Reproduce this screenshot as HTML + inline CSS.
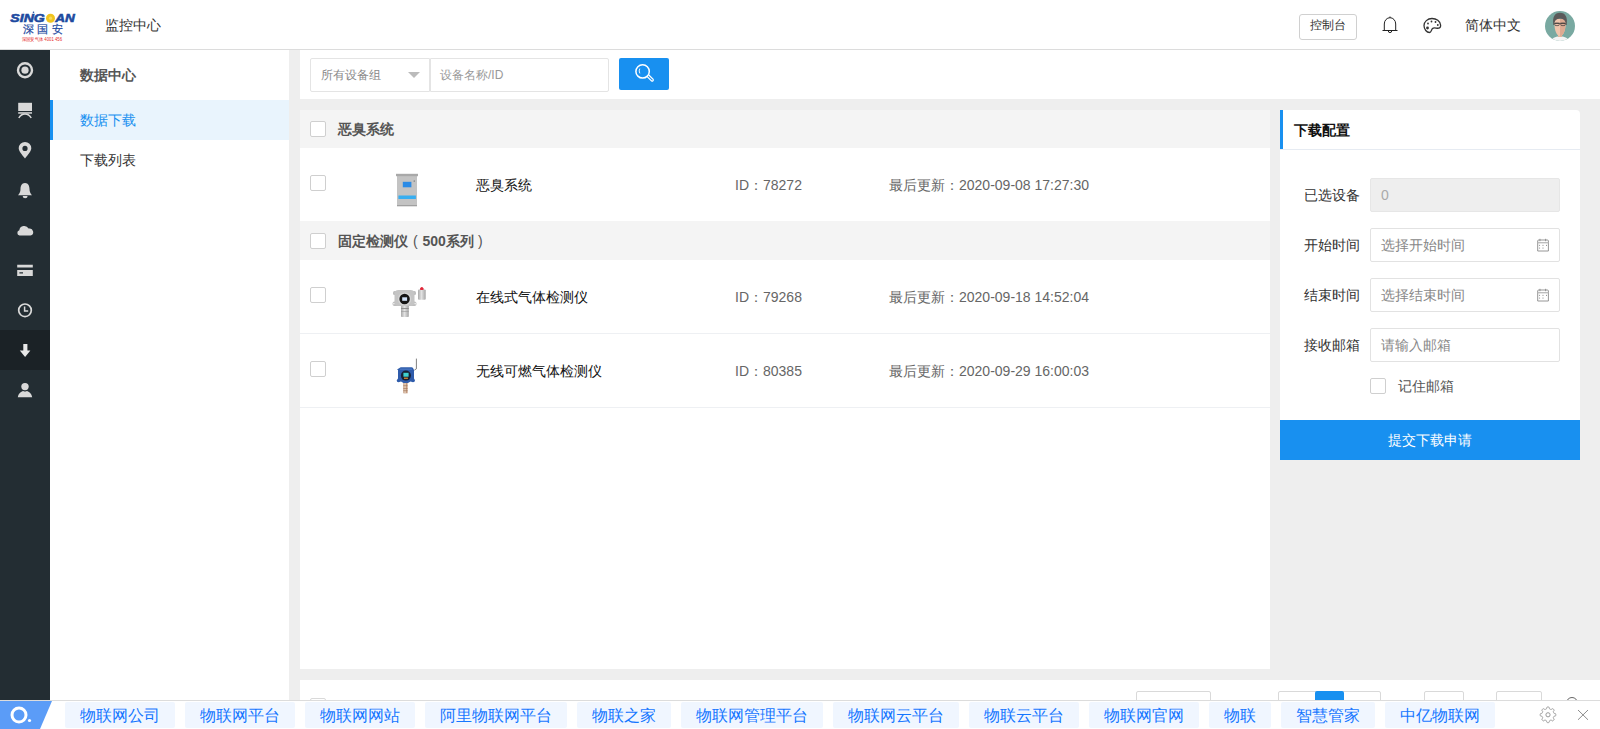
<!DOCTYPE html>
<html><head><meta charset="utf-8">
<style>
*{box-sizing:border-box;margin:0;padding:0}
html,body{width:1600px;height:729px;overflow:hidden;background:#eeeeee;font-family:"Liberation Sans",sans-serif;font-size:14px;color:#333}
.a{position:absolute}
.t{position:absolute;white-space:nowrap;line-height:20px}
#hdr{left:0;top:0;width:1600px;height:50px;background:#fff;border-bottom:1px solid #dcdcdc}
#side{left:0;top:50px;width:50px;height:650px;background:#232d33}
#sub{left:50px;top:50px;width:239px;height:650px;background:#fff}
#sbar{left:300px;top:50px;width:1300px;height:49px;background:#fff}
#list{left:300px;top:110px;width:970px;height:559px;background:#fff}
.grp{position:absolute;left:0;width:970px;height:38px;background:#f4f4f4}
.cb{position:absolute;width:16px;height:16px;border:1px solid #cfcfcf;border-radius:2px;background:#fff}
.row{position:absolute;left:0;width:970px;background:#fff;border-bottom:1px solid #eef0f3}
#rp{left:1280px;top:110px;width:300px;height:310px;background:#fff;border-radius:0 4px 0 0}
.inp{position:absolute;left:90px;width:190px;height:34px;border:1px solid #e2e2e2;border-radius:2px;background:#fff}
#btm{left:0;top:700px;width:1600px;height:29px;background:#fff;border-top:1px solid #dcdcdc}
.tag{position:absolute;top:1px;height:26px;background:#f0f6ff;color:#1677ff;font-size:16px;line-height:27px;padding:0 15px;border-radius:2px;white-space:nowrap}
</style></head><body>

<!-- header -->
<div id="hdr" class="a">
  <svg class="a" style="left:0;top:0" width="90" height="48" viewBox="0 0 90 48">
    <text x="10.3" y="21.9" font-family="Liberation Sans" font-weight="bold" font-style="italic" font-size="10.5" fill="#1d4a9f" stroke="#1d4a9f" stroke-width="0.55" textLength="34.5" lengthAdjust="spacingAndGlyphs">SING</text>
    <circle cx="50.5" cy="18.2" r="4.5" fill="#f0c41e"/>
    <circle cx="50.5" cy="18.2" r="1.6" fill="#f7d860"/>
    <text x="55.3" y="21.9" font-family="Liberation Sans" font-weight="bold" font-style="italic" font-size="10.5" fill="#1d4a9f" stroke="#1d4a9f" stroke-width="0.55" textLength="19.5" lengthAdjust="spacingAndGlyphs">AN</text>
    <circle cx="33.5" cy="12.3" r="0.8" fill="#1d4a9f"/>
    <text x="22.5" y="33.4" font-size="10.5" fill="#2148a0" stroke="#2148a0" stroke-width="0.2" textLength="40" lengthAdjust="spacing">深国安</text>
    <text x="22" y="41.3" font-size="5" fill="#e62a2a" textLength="40" lengthAdjust="spacingAndGlyphs">深国安气体 4001 456</text>
  </svg>
  <div class="t" style="left:105px;top:15px;color:#333">监控中心</div>
  <div class="a" style="left:1299px;top:14px;width:58px;height:26px;border:1px solid #d0d0d0;border-radius:3px"></div>
  <div class="t" style="left:1310px;top:15px;font-size:12px;color:#333">控制台</div>
  <svg class="a" style="left:1381px;top:15px" width="18" height="19" viewBox="0 0 18 19">
    <path d="M3.3 15.5 V9 A5.7 6.3 0 0 1 14.7 9 V15.5 M1.5 15.5 H16.5 M7.3 15.9 A1.7 1.7 0 0 0 10.7 15.9 M9 1.5 V2.7" fill="none" stroke="#222" stroke-width="1"/>
  </svg>
  <svg class="a" style="left:1423px;top:17px" width="19" height="17" viewBox="0 0 19 17">
    <path d="M9 1.5 C4.5 1.5 1 4.8 1 8.6 C1 12.5 3.8 15.5 6.5 15.5 C8.5 15.5 8 13 9.5 11.5 C11 10 13.5 11.5 15.5 11.2 C17.2 11 17.8 9.5 17.6 8 C17.2 4.2 13.5 1.5 9 1.5 Z" fill="none" stroke="#333" stroke-width="1.3"/>
    <circle cx="4.5" cy="11" r="1.4" fill="#333"/><circle cx="5" cy="6.5" r="0.9" fill="#333"/><circle cx="8.5" cy="4.5" r="0.9" fill="#333"/><circle cx="12.5" cy="5" r="0.9" fill="#333"/><circle cx="14.8" cy="8" r="0.9" fill="#333"/>
  </svg>
  <div class="t" style="left:1465px;top:15px;color:#333">简体中文</div>
  <svg class="a" style="left:1545px;top:11px" width="30" height="30" viewBox="0 0 30 30">
    <defs><clipPath id="av"><circle cx="15" cy="15" r="15"/></clipPath></defs>
    <circle cx="15" cy="15" r="15" fill="#79a9a1"/>
    <g clip-path="url(#av)">
      <path d="M6 30 Q7 26 15 25 Q23 26 24 30 Z" fill="#f4f4f4"/>
      <rect x="13" y="21" width="4" height="5" fill="#e0b49c"/>
      <path d="M9.2 8 Q9 24 15 25.5 Q21 24 20.8 8 Z" fill="#f0c4ac"/>
      <path d="M15 8 V25.5 Q21 24 20.8 8 Z" fill="#ddaa92"/>
      <path d="M8.3 14 Q6.8 2 15 1.8 Q23.2 2 21.7 14 L20.9 14 Q20.8 7.8 15 7.6 Q9.2 7.8 9.1 14 Z" fill="#5a5a5a"/>
      <path d="M9.2 12.3 H20.8" stroke="#3a3a3a" stroke-width="0.9"/>
      <rect x="9.8" y="12.2" width="4.4" height="2.4" rx="1" fill="none" stroke="#3a3a3a" stroke-width="0.7"/>
      <rect x="15.8" y="12.2" width="4.4" height="2.4" rx="1" fill="none" stroke="#3a3a3a" stroke-width="0.7"/>
    </g>
  </svg>
</div>

<!-- sidebar -->
<div id="side" class="a">
  <div class="a" style="left:0;top:280px;width:50px;height:40px;background:#1b2226"></div>
</div>
<svg class="a" style="left:0;top:0" width="50" height="420" viewBox="0 0 50 420">
  <g fill="#d9d9d9" stroke="none">
    <circle cx="25" cy="70.2" r="7" fill="none" stroke="#d9d9d9" stroke-width="2.4"/>
    <circle cx="25" cy="70.2" r="3.6"/>
    <rect x="18.2" y="102.8" width="13.8" height="8.2"/>
    <rect x="18.2" y="112.2" width="13.8" height="1.5"/>
    <path d="M18.8 118 Q21 114 25 114 Q29 114 31.2 118" fill="none" stroke="#d9d9d9" stroke-width="1.5"/>
    <path d="M25 158.5 C22 154.5 18.7 151 18.7 148.2 A6.3 6.3 0 0 1 31.3 148.2 C31.3 151 28 154.5 25 158.5 Z M25 145.8 A2.6 2.6 0 1 0 25 151 A2.6 2.6 0 1 0 25 145.8 Z" fill-rule="evenodd"/>
    <path d="M25 183 C21.5 183 20.5 186.5 20.5 189 C20.5 192 19.5 193.5 18 195.2 H32 C30.5 193.5 29.5 192 29.5 189 C29.5 186.5 28.5 183 25 183 Z"/>
    <path d="M22.7 196 A2.45 2.3 0 0 0 27.6 196 Z"/>
    <path d="M19.5 235.6 A2.8 2.8 0 0 1 19.3 230.2 A5 5 0 0 1 28.6 228.6 A3.6 3.6 0 0 1 30.5 235.6 Z"/>
    <path d="M17.2 264.8 H32.8 V276 H17.2 Z M17.2 267.4 V270 H32.8 V267.4 Z M19.4 272.2 V273.4 H23 V272.2 Z" fill-rule="evenodd"/>
    <circle cx="25" cy="310.3" r="6.3" fill="none" stroke="#d9d9d9" stroke-width="1.7"/>
    <path d="M24.6 306.5 V311 H28.2" fill="none" stroke="#d9d9d9" stroke-width="1.5"/>
    <path d="M23.3 344 H27.4 V350.5 H30.4 L25.1 357 L19.8 350.5 H23.3 Z" fill="#e8e8e8"/>
    <circle cx="25" cy="386.6" r="3.7"/>
    <path d="M17.8 397.3 C18.3 393.5 21 391.6 23.2 391 Q25 392.2 26.8 391 C29 391.6 31.7 393.5 32.2 397.3 Z"/>
  </g>
</svg>

<!-- submenu -->
<div id="sub" class="a">
  <div class="t" style="left:30px;top:15px;font-weight:bold;color:#555">数据中心</div>
  <div class="a" style="left:0;top:50px;width:239px;height:40px;background:#e9f4fd"></div>
  <div class="a" style="left:0;top:50px;width:3px;height:40px;background:#1890f0"></div>
  <div class="t" style="left:30px;top:60px;color:#1890f0">数据下载</div>
  <div class="t" style="left:30px;top:100px;color:#333">下载列表</div>
</div>

<!-- search bar -->
<div id="sbar" class="a">
  <div class="a" style="left:10px;top:8px;width:120px;height:34px;border:1px solid #e4e4e4;border-radius:2px 0 0 2px"></div>
  <div class="t" style="left:21px;top:15px;font-size:12px;color:#888">所有设备组</div>
  <div class="a" style="left:108px;top:22px;width:0;height:0;border-left:6px solid transparent;border-right:6px solid transparent;border-top:6px solid #bbb"></div>
  <div class="a" style="left:130px;top:8px;width:179px;height:34px;border:1px solid #e4e4e4;border-radius:0 2px 2px 0"></div>
  <div class="t" style="left:140px;top:15px;font-size:12px;color:#999">设备名称/ID</div>
  <div class="a" style="left:319px;top:8px;width:50px;height:32px;background:#1890f0;border-radius:2px"></div>
  <svg class="a" style="left:319px;top:8px" width="50" height="32" viewBox="619 58 50 32">
    <circle cx="642.6" cy="71.4" r="6.7" fill="none" stroke="#fff" stroke-width="1.5"/>
    <path d="M639.8 68.6 Q638.6 70.8 639.8 73.4" fill="none" stroke="#fff" stroke-width="0.9"/>
    <path d="M647.2 76.6 L651.6 81 A1.2 1.2 0 0 0 653.2 79.4 L648.8 75" fill="none" stroke="#fff" stroke-width="1.2"/>
  </svg>
</div>

<!-- list -->
<div id="list" class="a">
  <div class="grp" style="top:0">
    <div class="cb" style="left:10px;top:11px"></div>
    <div class="t" style="left:38px;top:9px;font-weight:bold;color:#555">恶臭系统</div>
  </div>
  <div class="row" style="top:38px;height:73px;border-bottom:none">
    <div class="cb" style="left:10px;top:27px"></div>
        <svg class="a" style="left:85px;top:23px" width="40" height="40" viewBox="385 171 40 40">
      <rect x="397" y="176" width="20" height="30" fill="#c3c3c3"/>
      <rect x="396" y="173.8" width="22" height="2.4" fill="#a9a9a9"/>
      <rect x="397" y="205" width="20" height="1.3" fill="#a0a0a0"/>
      <rect x="402.8" y="181.8" width="8.6" height="5.5" fill="#2b8be6"/>
      <rect x="398.4" y="195.5" width="17.5" height="3.5" fill="#38aef0"/>
      <circle cx="414.2" cy="181" r="0.6" fill="#444"/>
    </svg>
    <div class="t" style="left:176px;top:27px;color:#111">恶臭系统</div>
    <div class="t" style="left:435px;top:27px;color:#666">ID：78272</div>
    <div class="t" style="left:589px;top:27px;color:#666">最后更新：2020-09-08 17:27:30</div>
  </div>
  <div class="grp" style="top:111px;height:39px">
    <div class="cb" style="left:10px;top:12px"></div>
    <div class="t" style="left:38px;top:10px;font-weight:bold;color:#555">固定检测仪</div><div class="t" style="left:113px;top:10px;color:#555">(</div><div class="t" style="left:122.5px;top:10px;font-weight:bold;color:#555">500系列</div><div class="t" style="left:178px;top:10px;color:#555">)</div>
  </div>
  <div class="row" style="top:150px;height:74px">
    <div class="cb" style="left:10px;top:27px"></div>
        <svg class="a" style="left:85px;top:25px" width="45" height="45" viewBox="385 285 45 45">
      <defs><linearGradient id="gm" x1="0" x2="1" y1="0" y2="0"><stop offset="0" stop-color="#a9a9a9"/><stop offset="0.45" stop-color="#e2e2e2"/><stop offset="1" stop-color="#a5a5a5"/></linearGradient></defs>
      <rect x="401" y="305.5" width="7.8" height="11.5" rx="0.8" fill="url(#gm)"/>
      <rect x="401" y="308" width="7.8" height="0.9" fill="#8a8a8a"/>
      <rect x="401" y="311" width="7.8" height="0.6" fill="#9a9a9a"/>
      <rect x="393" y="291" width="23" height="4" rx="1.5" fill="#bdbdbd"/>
      <rect x="392.5" y="301.5" width="24" height="4.5" rx="2" fill="#bcbcbc"/>
      <rect x="394.5" y="290" width="20" height="16" rx="4" fill="#c4c4c4"/>
      <circle cx="393.8" cy="303.6" r="0.9" fill="#e8e8e8"/><circle cx="415.2" cy="303.6" r="0.9" fill="#e8e8e8"/>
      <circle cx="404.6" cy="299" r="6.6" fill="#d6d6d6"/>
      <circle cx="404.6" cy="299" r="5.2" fill="#151515"/>
      <rect x="402.2" y="297.3" width="4.9" height="3.5" fill="#d2e2f7"/>
      <rect x="418" y="289.5" width="7.7" height="10.3" rx="1" fill="url(#gm)"/>
      <path d="M419.8 289.8 A2 2 0 0 1 423.8 289.8 Z" fill="#e0283a"/>
      <circle cx="421.8" cy="288.4" r="1.5" fill="#e0283a"/>
    </svg>
    <div class="t" style="left:176px;top:27px;color:#111">在线式气体检测仪</div>
    <div class="t" style="left:435px;top:27px;color:#666">ID：79268</div>
    <div class="t" style="left:589px;top:27px;color:#666">最后更新：2020-09-18 14:52:04</div>
  </div>
  <div class="row" style="top:224px;height:74px">
    <div class="cb" style="left:10px;top:27px"></div>
        <svg class="a" style="left:85px;top:20px" width="45" height="45" viewBox="385 354 45 45">
      <rect x="403.3" y="383" width="4.3" height="10.3" fill="#c39a7e"/>
      <rect x="404.4" y="383" width="1.3" height="10.3" fill="#ead6c6"/>
      <rect x="403.3" y="385.5" width="4.3" height="0.6" fill="#9d7459"/><rect x="403.3" y="388" width="4.3" height="0.6" fill="#9d7459"/><rect x="403.3" y="390.5" width="4.3" height="0.6" fill="#9d7459"/>
      <path d="M416.4 358.6 V368.8 L414.3 370.2" fill="none" stroke="#4a4a4a" stroke-width="0.7"/>
      <path d="M399.5 368 Q400 367.2 401 367.2 H411.5 Q412.6 367.2 413 368 L414 370 V378.5 L415 380.2 Q415 382.2 413 382.2 L410.5 381.5 L408 383 H403.5 L401 381.5 L398.5 382.2 Q396.6 382.2 396.7 380.2 L398 378.5 V370 L397 369.6 Z" fill="#2f5cab"/>
      <path d="M400 368.5 H412 V370 H400 Z" fill="#4d7bc6" opacity="0.7"/>
      <circle cx="405.9" cy="375.6" r="5" fill="#172033"/>
      <rect x="403.4" y="372.8" width="5.2" height="3.9" fill="#3fd1cf"/>
      <rect x="404" y="377.6" width="3.9" height="1.3" fill="#d88a2e"/>
    </svg>
    <div class="t" style="left:176px;top:27px;color:#111">无线可燃气体检测仪</div>
    <div class="t" style="left:435px;top:27px;color:#666">ID：80385</div>
    <div class="t" style="left:589px;top:27px;color:#666">最后更新：2020-09-29 16:00:03</div>
  </div>
</div>

<!-- right panel -->
<div id="rp" class="a">
  <div class="a" style="left:0;top:0;width:3px;height:39px;background:#1890f0"></div>
  <div class="a" style="left:0;top:39px;width:300px;height:1px;background:#e6ebf2"></div>
  <div class="t" style="left:14px;top:10px;font-weight:bold;color:#111">下载配置</div>
  <div class="t" style="left:24px;top:75px">已选设备</div>
  <div class="inp" style="top:68px;background:#eeeeee;border-color:#e6e6e6"></div>
  <div class="t" style="left:101px;top:75px;color:#aaa">0</div>
  <div class="t" style="left:24px;top:125px">开始时间</div>
  <div class="inp" style="top:118px"></div>
  <div class="t" style="left:101px;top:125px;color:#888">选择开始时间</div>
  <svg class="a" style="left:255px;top:126px" width="16" height="16" viewBox="1535 236 16 16">
    <path d="M1537.7 241 V251 H1548.4 V241 Q1548.4 240 1547.4 240 H1538.7 Q1537.7 240 1537.7 241 Z" fill="none" stroke="#8a8a8a" stroke-width="0.9"/>
    <rect x="1537.7" y="242" width="10.7" height="1.4" fill="#bdbdbd"/>
    <rect x="1539.5" y="238.8" width="0.9" height="2.4" fill="#8a8a8a"/>
    <rect x="1545.2" y="238.8" width="0.9" height="2.4" fill="#8a8a8a"/>
    <circle cx="1539.6" cy="245.3" r="0.55" fill="#777"/><circle cx="1543" cy="245.3" r="0.55" fill="#777"/><circle cx="1546.5" cy="245.3" r="0.55" fill="#777"/>
    <circle cx="1539.6" cy="248" r="0.55" fill="#777"/><circle cx="1543" cy="248" r="0.55" fill="#777"/>
  </svg>
  <div class="t" style="left:24px;top:175px">结束时间</div>
  <div class="inp" style="top:168px"></div>
  <div class="t" style="left:101px;top:175px;color:#888">选择结束时间</div>
  <svg class="a" style="left:255px;top:176px" width="16" height="16" viewBox="1535 286 16 16">
    <path d="M1537.7 291 V301 H1548.4 V291 Q1548.4 290 1547.4 290 H1538.7 Q1537.7 290 1537.7 291 Z" fill="none" stroke="#8a8a8a" stroke-width="0.9"/>
    <rect x="1537.7" y="292" width="10.7" height="1.4" fill="#bdbdbd"/>
    <rect x="1539.5" y="288.8" width="0.9" height="2.4" fill="#8a8a8a"/>
    <rect x="1545.2" y="288.8" width="0.9" height="2.4" fill="#8a8a8a"/>
    <circle cx="1539.6" cy="295.3" r="0.55" fill="#777"/><circle cx="1543" cy="295.3" r="0.55" fill="#777"/><circle cx="1546.5" cy="295.3" r="0.55" fill="#777"/>
    <circle cx="1539.6" cy="298" r="0.55" fill="#777"/><circle cx="1543" cy="298" r="0.55" fill="#777"/>
  </svg>
  <div class="t" style="left:24px;top:225px">接收邮箱</div>
  <div class="inp" style="top:218px"></div>
  <div class="t" style="left:101px;top:225px;color:#888">请输入邮箱</div>
  <div class="cb" style="left:90px;top:268px"></div>
  <div class="t" style="left:118px;top:266px;color:#555">记住邮箱</div>
</div>
<div class="a" style="left:1280px;top:420px;width:300px;height:40px;background:#1890f0;color:#fff;text-align:center;line-height:40px">提交下载申请</div>

<!-- pagination strip -->
<div class="a" style="left:300px;top:680px;width:1300px;height:20px;background:#fff">
  <div class="a" style="left:10px;top:18px;width:16px;height:16px;border:1px solid #d9d9d9;border-radius:2px"></div>
  <div class="a" style="left:836px;top:11px;width:75px;height:20px;border:1px solid #d9d9d9;border-radius:2px"></div>
  <div class="a" style="left:978px;top:11px;width:103px;height:20px;border:1px solid #d9d9d9;border-radius:2px"></div>
  <div class="a" style="left:1015px;top:11px;width:29px;height:20px;background:#1890f0;border-radius:2px"></div>
  <div class="a" style="left:1124px;top:11px;width:40px;height:20px;border:1px solid #d9d9d9;border-radius:2px"></div>
  <div class="a" style="left:1196px;top:11px;width:46px;height:20px;border:1px solid #d9d9d9;border-radius:2px"></div>
  <div class="a" style="left:1266px;top:17px;width:12px;height:12px;border:1.5px solid #666;border-radius:50%"></div>
</div>

<!-- bottom bar -->
<div id="btm" class="a">
  <svg class="a" style="left:0;top:0" width="54" height="28" viewBox="0 0 54 28">
    <path d="M0 0 H52 L40 28 H0 Z" fill="#5b9cf7"/>
    <circle cx="19" cy="14" r="7" fill="none" stroke="#fff" stroke-width="3"/>
    <circle cx="29.5" cy="19.5" r="1.6" fill="#fff"/>
  </svg>
  <div class="tag" style="left:65px">物联网公司</div>
  <div class="tag" style="left:185px">物联网平台</div>
  <div class="tag" style="left:305px">物联网网站</div>
  <div class="tag" style="left:425px">阿里物联网平台</div>
  <div class="tag" style="left:577px">物联之家</div>
  <div class="tag" style="left:681px">物联网管理平台</div>
  <div class="tag" style="left:833px">物联网云平台</div>
  <div class="tag" style="left:969px">物联云平台</div>
  <div class="tag" style="left:1089px">物联网官网</div>
  <div class="tag" style="left:1209px">物联</div>
  <div class="tag" style="left:1281px">智慧管家</div>
  <div class="tag" style="left:1385px">中亿物联网</div>
  <svg class="a" style="left:1538px;top:4px" width="20" height="20" viewBox="1538 705 20 20">
    <path d="M1548.00 707.00 L1548.20 707.00 L1548.41 707.02 L1548.61 707.04 L1548.81 707.09 L1549.00 707.19 L1549.17 707.40 L1549.30 707.79 L1549.39 708.28 L1549.47 708.67 L1549.59 708.88 L1549.72 709.00 L1549.86 709.08 L1550.01 709.14 L1550.15 709.20 L1550.30 709.26 L1550.44 709.32 L1550.59 709.38 L1550.73 709.44 L1550.89 709.48 L1551.06 709.49 L1551.30 709.42 L1551.63 709.21 L1552.04 708.92 L1552.40 708.74 L1552.67 708.71 L1552.88 708.78 L1553.05 708.88 L1553.21 709.01 L1553.37 709.14 L1553.52 709.28 L1553.66 709.43 L1553.79 709.59 L1553.92 709.75 L1554.02 709.92 L1554.09 710.13 L1554.06 710.40 L1553.88 710.76 L1553.59 711.17 L1553.38 711.50 L1553.31 711.74 L1553.32 711.91 L1553.36 712.07 L1553.42 712.21 L1553.48 712.36 L1553.54 712.50 L1553.60 712.65 L1553.66 712.79 L1553.72 712.94 L1553.80 713.08 L1553.92 713.21 L1554.13 713.33 L1554.52 713.41 L1555.01 713.50 L1555.40 713.63 L1555.61 713.80 L1555.71 713.99 L1555.76 714.19 L1555.78 714.39 L1555.80 714.60 L1555.80 714.80 L1555.80 715.00 L1555.78 715.21 L1555.76 715.41 L1555.71 715.61 L1555.61 715.80 L1555.40 715.97 L1555.01 716.10 L1554.52 716.19 L1554.13 716.27 L1553.92 716.39 L1553.80 716.52 L1553.72 716.66 L1553.66 716.81 L1553.60 716.95 L1553.54 717.10 L1553.48 717.24 L1553.42 717.39 L1553.36 717.53 L1553.32 717.69 L1553.31 717.86 L1553.38 718.10 L1553.59 718.43 L1553.88 718.84 L1554.06 719.20 L1554.09 719.47 L1554.02 719.68 L1553.92 719.85 L1553.79 720.01 L1553.66 720.17 L1553.52 720.32 L1553.37 720.46 L1553.21 720.59 L1553.05 720.72 L1552.88 720.82 L1552.67 720.89 L1552.40 720.86 L1552.04 720.68 L1551.63 720.39 L1551.30 720.18 L1551.06 720.11 L1550.89 720.12 L1550.73 720.16 L1550.59 720.22 L1550.44 720.28 L1550.30 720.34 L1550.15 720.40 L1550.01 720.46 L1549.86 720.52 L1549.72 720.60 L1549.59 720.72 L1549.47 720.93 L1549.39 721.32 L1549.30 721.81 L1549.17 722.20 L1549.00 722.41 L1548.81 722.51 L1548.61 722.56 L1548.41 722.58 L1548.20 722.60 L1548.00 722.60 L1547.80 722.60 L1547.59 722.58 L1547.39 722.56 L1547.19 722.51 L1547.00 722.41 L1546.83 722.20 L1546.70 721.81 L1546.61 721.32 L1546.53 720.93 L1546.41 720.72 L1546.28 720.60 L1546.14 720.52 L1545.99 720.46 L1545.85 720.40 L1545.70 720.34 L1545.56 720.28 L1545.41 720.22 L1545.27 720.16 L1545.11 720.12 L1544.94 720.11 L1544.70 720.18 L1544.37 720.39 L1543.96 720.68 L1543.60 720.86 L1543.33 720.89 L1543.12 720.82 L1542.95 720.72 L1542.79 720.59 L1542.63 720.46 L1542.48 720.32 L1542.34 720.17 L1542.21 720.01 L1542.08 719.85 L1541.98 719.68 L1541.91 719.47 L1541.94 719.20 L1542.12 718.84 L1542.41 718.43 L1542.62 718.10 L1542.69 717.86 L1542.68 717.69 L1542.64 717.53 L1542.58 717.39 L1542.52 717.24 L1542.46 717.10 L1542.40 716.95 L1542.34 716.81 L1542.28 716.66 L1542.20 716.52 L1542.08 716.39 L1541.87 716.27 L1541.48 716.19 L1540.99 716.10 L1540.60 715.97 L1540.39 715.80 L1540.29 715.61 L1540.24 715.41 L1540.22 715.21 L1540.20 715.00 L1540.20 714.80 L1540.20 714.60 L1540.22 714.39 L1540.24 714.19 L1540.29 713.99 L1540.39 713.80 L1540.60 713.63 L1540.99 713.50 L1541.48 713.41 L1541.87 713.33 L1542.08 713.21 L1542.20 713.08 L1542.28 712.94 L1542.34 712.79 L1542.40 712.65 L1542.46 712.50 L1542.52 712.36 L1542.58 712.21 L1542.64 712.07 L1542.68 711.91 L1542.69 711.74 L1542.62 711.50 L1542.41 711.17 L1542.12 710.76 L1541.94 710.40 L1541.91 710.13 L1541.98 709.92 L1542.08 709.75 L1542.21 709.59 L1542.34 709.43 L1542.48 709.28 L1542.63 709.14 L1542.79 709.01 L1542.95 708.88 L1543.12 708.78 L1543.33 708.71 L1543.60 708.74 L1543.96 708.92 L1544.37 709.21 L1544.70 709.42 L1544.94 709.49 L1545.11 709.48 L1545.27 709.44 L1545.41 709.38 L1545.56 709.32 L1545.70 709.26 L1545.85 709.20 L1545.99 709.14 L1546.14 709.08 L1546.28 709.00 L1546.41 708.88 L1546.53 708.67 L1546.61 708.28 L1546.70 707.79 L1546.83 707.40 L1547.00 707.19 L1547.19 707.09 L1547.39 707.04 L1547.59 707.02 L1547.80 707.00 Z" stroke="#999" stroke-width="1" stroke-linejoin="round" fill="none"/>
    <circle cx="1548" cy="714.8" r="2.1" fill="none" stroke="#999" stroke-width="1"/>
  </svg>
  <svg class="a" style="left:1576px;top:8px" width="14" height="14" viewBox="1576 709 14 14">
    <path d="M1578 710 L1588 719.8 M1588 710 L1578 719.8" stroke="#8c8c8c" stroke-width="1" fill="none"/>
  </svg>
</div>

</body></html>
